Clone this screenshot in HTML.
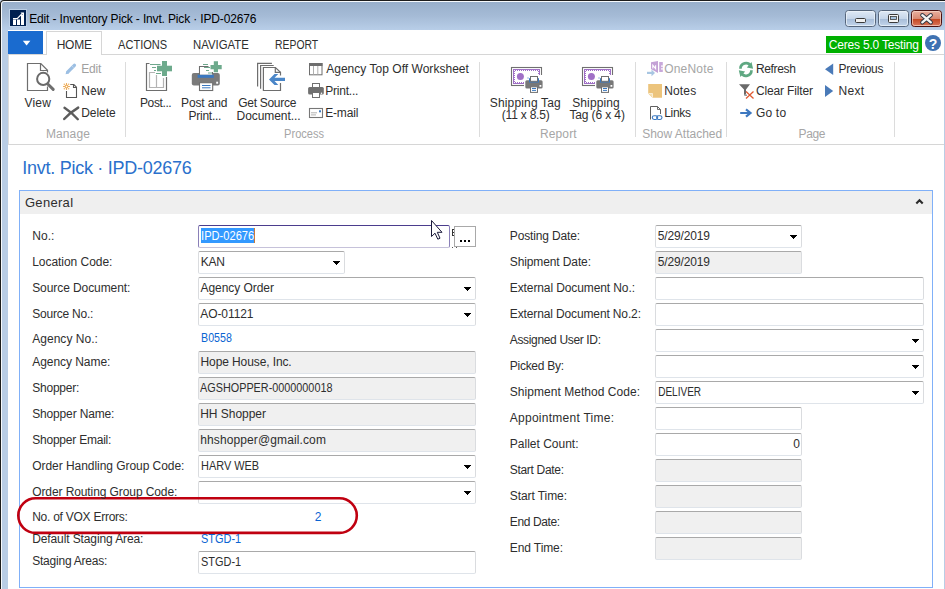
<!DOCTYPE html>
<html><head><meta charset="utf-8">
<style>
*{margin:0;padding:0;box-sizing:border-box}
html,body{width:945px;height:589px;overflow:hidden;background:#fff;font-family:"Liberation Sans",sans-serif;font-size:12px;color:#000;position:relative}
.a{position:absolute}
.t{position:absolute;white-space:pre;font-family:"Liberation Sans",sans-serif}
.sep{position:absolute;top:62px;width:1px;height:75px;background:#dcdcdc}
.f{position:absolute;height:23px;border:1px solid #dadcdf;border-top-color:#a9a9a9;border-bottom-color:#dfe4ea;border-radius:2px;background:#fff}
.f.g{background:#f0f0f0}
svg{position:absolute;left:0;top:0}
</style></head><body>
<!-- window frame -->
<div class="a" style="left:0;top:0;width:945px;height:589px;background:#c9d9eb"></div>
<div class="a" style="left:0;top:0;width:950px;height:600px;border-radius:4px 0 0 0;background:#1c1c1c"></div>
<div class="a" style="left:1px;top:1px;width:950px;height:600px;border-radius:3px 0 0 0;background:#f6f9fc"></div>
<div class="a" style="left:2px;top:2px;width:943px;height:587px;border-radius:2px 0 0 0;background:linear-gradient(#98afcb 0px,#a5bbd6 14px,#b8cee8 28px,#b9cde5 30px,#b9cde5 100%)"></div>
<div class="a" style="left:8px;top:30px;width:936px;height:559px;background:#fff"></div>

<!-- tab row -->
<div class="a" style="left:8px;top:31px;width:35px;height:23px;background:#1a6bcf"></div>
<div class="a" style="left:8px;top:54px;width:936px;height:1px;background:#d6d6d6"></div>
<div class="a" style="left:46px;top:31px;width:56px;height:24px;border:1px solid #d6d6d6;border-bottom:none;background:#fff"></div>
<div class="a" style="left:826px;top:36px;width:96px;height:17px;background:#00b000"></div>

<!-- ribbon -->
<div class="a" style="left:8px;top:144px;width:936px;height:1px;background:#d6d6d6"></div>
<div class="a" style="left:8px;top:55px;width:1px;height:90px;background:#dcdcdc"></div>
<div class="sep" style="left:125px"></div>
<div class="sep" style="left:479px"></div>
<div class="sep" style="left:635px"></div>
<div class="sep" style="left:726px"></div>
<div class="sep" style="left:894px"></div>

<!-- panel -->
<div class="a" style="left:19px;top:190px;width:914px;height:398px;border:1px solid #80b0f8;background:#fff"></div>
<div class="a" style="left:20px;top:191px;width:912px;height:23px;background:#efefef"></div>

<!-- left fields -->
<div class="f" style="left:198px;top:225px;width:252px;border-color:#c6c2da;border-top-color:#4b3d8d;border-left-color:#8a80b8;border-right-color:#8a80b8"></div>
<div class="a" style="left:201px;top:228px;width:53px;height:15px;background:#3399ff"></div>
<div class="a" style="left:254px;top:228px;width:1px;height:15px;background:#c87a3a"></div>
<div class="a" style="left:454px;top:226px;width:22px;height:21px;border:1px solid #a9a9a9;background:#fff"></div>
<div class="f" style="left:198px;top:251px;width:147px"></div>
<div class="f" style="left:198px;top:277px;width:278px"></div>
<div class="f" style="left:198px;top:303px;width:278px"></div>
<div class="f g" style="left:198px;top:351px;width:278px"></div>
<div class="f g" style="left:198px;top:377px;width:278px"></div>
<div class="f g" style="left:198px;top:403px;width:278px"></div>
<div class="f g" style="left:198px;top:429px;width:278px"></div>
<div class="f" style="left:198px;top:455px;width:278px"></div>
<div class="f" style="left:198px;top:481px;width:278px"></div>
<div class="f" style="left:198px;top:551px;width:278px"></div>

<!-- right fields -->
<div class="f" style="left:655px;top:225px;width:147px"></div>
<div class="f g" style="left:655px;top:251px;width:147px"></div>
<div class="f" style="left:655px;top:277px;width:269px"></div>
<div class="f" style="left:655px;top:303px;width:269px"></div>
<div class="f" style="left:655px;top:329px;width:269px"></div>
<div class="f" style="left:655px;top:355px;width:269px"></div>
<div class="f" style="left:655px;top:381px;width:269px"></div>
<div class="f" style="left:655px;top:407px;width:147px"></div>
<div class="f" style="left:655px;top:433px;width:147px"></div>
<div class="f g" style="left:655px;top:459px;width:147px"></div>
<div class="f g" style="left:655px;top:485px;width:147px"></div>
<div class="f g" style="left:655px;top:511px;width:147px"></div>
<div class="f g" style="left:655px;top:537px;width:147px"></div>
<svg width="945" height="589" viewBox="0 0 945 589">
<!-- app icon -->
<rect x="9" y="9" width="18" height="18" fill="#c8d8ec" opacity="0.7"/>
<rect x="10" y="10" width="16" height="16" fill="#002050"/>
<path d="M13 19.5h3v5.5h-3zM17 19.5h3v5.5h-3zM21 15h3v10h-3z" fill="#fff"/>
<path d="M13 18.6H17.2L22.6 13.2" stroke="#fff" stroke-width="1.2" fill="none"/>
<path d="M20.5 12.5H24V16Z" fill="#fff"/>
<!-- window buttons -->
<g>
<rect x="845.5" y="10.5" width="30" height="16" rx="3" fill="url(#gb)" stroke="#56667c"/>
<rect x="878.5" y="10.5" width="30" height="16" rx="3" fill="url(#gb)" stroke="#56667c"/>
<rect x="911.5" y="10.5" width="30" height="16" rx="3" fill="url(#gr)" stroke="#4a1010"/>
<rect x="846.5" y="11.5" width="28" height="14" rx="2" fill="none" stroke="#eef4fa" stroke-opacity="0.75"/>
<rect x="879.5" y="11.5" width="28" height="14" rx="2" fill="none" stroke="#eef4fa" stroke-opacity="0.75"/>
<rect x="912.5" y="11.5" width="28" height="14" rx="2" fill="none" stroke="#f8d8cc" stroke-opacity="0.7"/>
<rect x="855.5" y="18.5" width="10" height="4" rx="1" fill="#f0f0f0" stroke="#3a3a3a"/>
<rect x="888.5" y="14.5" width="10" height="8" rx="1" fill="#f4f4f4" stroke="#3a3a3a"/>
<rect x="890.5" y="16.5" width="6" height="3" fill="#a8c4e0" stroke="#3a3a3a" stroke-width="0.8"/>
<path d="M922.3 15.2L930.8 22.3M930.8 15.2L922.3 22.3" stroke="#2e3440" stroke-width="4.2" stroke-linecap="round"/>
<path d="M922.3 15.2L930.8 22.3M930.8 15.2L922.3 22.3" stroke="#f4f4f4" stroke-width="2.4" stroke-linecap="round"/>
</g>
<defs>
<linearGradient id="gb" x1="0" y1="0" x2="0" y2="1"><stop offset="0" stop-color="#e0eaf6"/><stop offset="0.5" stop-color="#c6d6ea"/><stop offset="0.51" stop-color="#a6bcd8"/><stop offset="1" stop-color="#c4d6ec"/></linearGradient>
<linearGradient id="gr" x1="0" y1="0" x2="0" y2="1"><stop offset="0" stop-color="#eab2a2"/><stop offset="0.5" stop-color="#d98a74"/><stop offset="0.51" stop-color="#c2441e"/><stop offset="1" stop-color="#dc7a60"/></linearGradient>
</defs>
<!-- dropdown arrow (tab) -->
<path d="M22.8 40.8h7.6l-3.8 4.6z" fill="#fff"/>
<!-- help -->
<circle cx="933" cy="43" r="8" fill="#3f72b2"/>
<text x="933" y="48.5" font-family="Liberation Sans" font-size="14" font-weight="bold" fill="#fff" text-anchor="middle">?</text>
<!-- panel collapse chevron -->
<path d="M916.3 203.4 L919.5 200.2 L922.7 203.4" stroke="#2a2a2a" stroke-width="2.1" fill="none"/>
</svg>
<svg width="945" height="589" viewBox="0 0 945 589">
<!-- View -->
<g fill="none" stroke="#6e6e6e" stroke-width="1.2">
<path d="M47.5 86.5V90.5H27.5V63.5H40.8L47.5 70.3V72.5"/>
<path d="M40.5 63.5V70.5H47.5"/>
</g>
<circle cx="43.2" cy="78.9" r="6.1" fill="none" stroke="#6a6a6a" stroke-width="2"/>
<path d="M48 84.2L53.2 89.4" stroke="#6e6e6e" stroke-width="3" stroke-linecap="round"/>
<!-- Edit pencil -->
<path d="M67.9 71.9L74.4 65.3" stroke="#9cbfe3" stroke-width="3.3" stroke-linecap="round"/>
<path d="M65.6 74.3L66.3 70.9L69 73.6Z" fill="#9cbfe3"/>
<path d="M72.2 66.3L73.5 67.6" stroke="#fff" stroke-width="0.6" opacity="0.8"/>
<!-- New -->
<g fill="none" stroke="#555" stroke-width="1.1">
<path d="M70.2 84.5H73.8L76.5 87.2V97.5H66.5V91"/>
<path d="M73.5 84.5V87.5H76.5"/>
</g>
<g stroke="#edae5c" stroke-width="1.1" fill="none">
<circle cx="66.5" cy="86.5" r="1.4" fill="#fff"/>
<path d="M66.5 83V85M66.5 88V90M63 86.5H65M68 86.5H70"/>
</g>
<g fill="#edae5c"><circle cx="64.3" cy="84.3" r="0.7"/><circle cx="68.7" cy="84.3" r="0.7"/><circle cx="64.3" cy="88.7" r="0.7"/><circle cx="68.7" cy="88.7" r="0.7"/></g>
<!-- Delete X -->
<path d="M64.5 107.8Q71 112 77.8 119.2M64.2 119Q70 112.5 78.2 107.6" stroke="#5c5c5c" stroke-width="2.4" fill="none" stroke-linecap="round"/>

<!-- Post -->
<g fill="none" stroke="#6e6e6e" stroke-width="1.2">
<path d="M149.5 63.5H146.5V90.5H166.5V77"/>
</g>
<g fill="none" stroke="#b4b4b4" stroke-width="1.2">
<path d="M155 72.5H149.5V87.5H163.5V78M156.5 75V87.5"/>
</g>
<g stroke="#6fa88d" stroke-width="1.2">
<path d="M150 64.5H160.5M152 67.5H156M154 70.5H156M156 73.5H161"/>
</g>
<path d="M162 61H167V65.7H172V71.2H167V76H162V71.2H157V65.7H162Z" fill="#6daa8c" stroke="#fff" stroke-width="1"/>
<path d="M162 61H167V65.7H172V71.2H167V76H162V71.2H157V65.7H162Z" fill="#6daa8c"/>

<!-- Post and Print -->
<rect x="191.8" y="73" width="28" height="12.5" rx="2" fill="#7a7a7a"/>
<rect x="197.6" y="74.6" width="16.2" height="3.2" fill="#3a78c0"/>
<path d="M199.5 74.8V66.5H208.5" fill="none" stroke="#6e6e6e" stroke-width="1.1"/>
<rect x="200" y="67" width="12.5" height="7.6" fill="#fff"/>
<path d="M212.5 74.5V72" stroke="#6e6e6e" stroke-width="1.1"/>
<g stroke="#6fa88d" stroke-width="1.1">
<path d="M203 64.5H208M204 67.5H210M206 70.5H209M208 73H212"/>
</g>
<path d="M213.8 61.2H218V65H221.7V69.3H218V72.2H213.8V69.3H210.5V65H213.8Z" fill="#6daa8c"/>
<rect x="199.5" y="82.7" width="13.2" height="7.8" fill="#fff" stroke="#6e6e6e" stroke-width="1.1"/>
<path d="M202 85.5H210.5M202 87.8H210.5" stroke="#3a78c0" stroke-width="1"/>
<rect x="216.2" y="81.7" width="1.9" height="2" fill="#fff"/>

<!-- Get Source -->
<g fill="none" stroke="#6e6e6e" stroke-width="1.2">
<path d="M257.6 86.6V63.4H271.9"/>
<path d="M260.6 88.7V65.5H273.7"/>
<path d="M280.5 83V90.5H263.4V67.5H275.4L280.5 72.3V75.5"/>
<path d="M275.3 67.5V72.4H280.5"/>
</g>
<path d="M269 79.4L274.5 73.9H278.3L274.5 77.8H285V81H274.5L278.3 85H274.5Z" fill="#4a86c8"/>

<!-- Worksheet -->
<rect x="309.5" y="63.5" width="12.5" height="11.3" fill="none" stroke="#6e6e6e" stroke-width="1"/>
<rect x="309" y="63" width="13.5" height="3" fill="#6e6e6e"/>
<path d="M313.5 66V74.5M317.8 66V74.5" stroke="#b0b0b0" stroke-width="1"/>
<!-- Print small -->
<rect x="312.5" y="83.5" width="7" height="4" fill="#fff" stroke="#707070" stroke-width="1"/>
<rect x="308.1" y="87.1" width="15.7" height="7.5" rx="1.5" fill="#707070"/>
<rect x="312.5" y="92.5" width="7" height="5" fill="#fff" stroke="#707070" stroke-width="1"/>
<circle cx="321.5" cy="93.2" r="0.8" fill="#fff"/>
<!-- E-mail -->
<rect x="309.5" y="108.5" width="13" height="9" fill="#fff" stroke="#777" stroke-width="1.1"/>
<rect x="319" y="110.3" width="2" height="2" fill="#3a78c0"/>
<path d="M311 112.8H317M311 114.9H316" stroke="#a8a8a8" stroke-width="0.9"/>

<!-- Shipping Tag icons -->
<g>
<rect x="511.5" y="67.5" width="30" height="18" fill="#fff" stroke="#707070" stroke-width="1.1"/>
<rect x="513" y="69" width="27" height="15" fill="#a070c6"/>
<rect x="515" y="71" width="23" height="11" fill="#fff"/>
<path d="M514 70h1v1h-1zM514 82h1v1h-1zM516 70h1v1h-1zM516 82h1v1h-1zM518 70h1v1h-1zM518 82h1v1h-1zM520 70h1v1h-1zM520 82h1v1h-1zM522 70h1v1h-1zM522 82h1v1h-1zM524 70h1v1h-1zM524 82h1v1h-1zM526 70h1v1h-1zM526 82h1v1h-1zM528 70h1v1h-1zM528 82h1v1h-1zM530 70h1v1h-1zM530 82h1v1h-1zM532 70h1v1h-1zM532 82h1v1h-1zM534 70h1v1h-1zM534 82h1v1h-1zM536 70h1v1h-1zM536 82h1v1h-1zM538 70h1v1h-1zM538 82h1v1h-1zM514 72h1v1h-1zM538 72h1v1h-1zM514 74h1v1h-1zM538 74h1v1h-1zM514 76h1v1h-1zM538 76h1v1h-1zM514 78h1v1h-1zM538 78h1v1h-1zM514 80h1v1h-1zM538 80h1v1h-1z" fill="#fff"/>
<circle cx="520.4" cy="76.4" r="3.5" fill="#a070c6"/>
<rect x="524" y="75" width="20" height="19" fill="#fff"/>
<rect x="525.3" y="80.3" width="17.3" height="8.2" rx="1.5" fill="#787878"/>
<rect x="529" y="78.2" width="10" height="4.3" fill="#3a78c0"/>
<rect x="530.5" y="76.5" width="7" height="4.8" fill="#fff" stroke="#707070" stroke-width="1"/>
<rect x="530.5" y="86.8" width="7" height="5.6" fill="#fff" stroke="#707070" stroke-width="1"/>
<path d="M532 88.5H536M532 90.4H536" stroke="#3a78c0" stroke-width="1"/>
<rect x="539.5" y="85" width="1.8" height="1.8" fill="#fff"/>
<rect x="527.5" y="77.5" width="1" height="1" fill="#3a78c0"/>
</g>
<g transform="translate(71 0)">
<rect x="511.5" y="67.5" width="30" height="18" fill="#fff" stroke="#707070" stroke-width="1.1"/>
<rect x="513" y="69" width="27" height="15" fill="#a070c6"/>
<rect x="515" y="71" width="23" height="11" fill="#fff"/>
<path d="M514 70h1v1h-1zM514 82h1v1h-1zM516 70h1v1h-1zM516 82h1v1h-1zM518 70h1v1h-1zM518 82h1v1h-1zM520 70h1v1h-1zM520 82h1v1h-1zM522 70h1v1h-1zM522 82h1v1h-1zM524 70h1v1h-1zM524 82h1v1h-1zM526 70h1v1h-1zM526 82h1v1h-1zM528 70h1v1h-1zM528 82h1v1h-1zM530 70h1v1h-1zM530 82h1v1h-1zM532 70h1v1h-1zM532 82h1v1h-1zM534 70h1v1h-1zM534 82h1v1h-1zM536 70h1v1h-1zM536 82h1v1h-1zM538 70h1v1h-1zM538 82h1v1h-1zM514 72h1v1h-1zM538 72h1v1h-1zM514 74h1v1h-1zM538 74h1v1h-1zM514 76h1v1h-1zM538 76h1v1h-1zM514 78h1v1h-1zM538 78h1v1h-1zM514 80h1v1h-1zM538 80h1v1h-1z" fill="#fff"/>
<circle cx="520.4" cy="76.4" r="3.5" fill="#a070c6"/>
<rect x="524" y="75" width="20" height="19" fill="#fff"/>
<rect x="525.3" y="80.3" width="17.3" height="8.2" rx="1.5" fill="#787878"/>
<rect x="529" y="78.2" width="10" height="4.3" fill="#3a78c0"/>
<rect x="530.5" y="76.5" width="7" height="4.8" fill="#fff" stroke="#707070" stroke-width="1"/>
<rect x="530.5" y="86.8" width="7" height="5.6" fill="#fff" stroke="#707070" stroke-width="1"/>
<path d="M532 88.5H536M532 90.4H536" stroke="#3a78c0" stroke-width="1"/>
<rect x="539.5" y="85" width="1.8" height="1.8" fill="#fff"/>
<rect x="527.5" y="77.5" width="1" height="1" fill="#3a78c0"/>
</g>


<!-- OneNote -->
<path d="M651 62.2L658 61V73L654.5 71L651 69Z" fill="#c4a2d6"/>
<path d="M652.8 68.6V65.2L655.6 68.6V65.2" stroke="#fff" stroke-width="1.1" fill="none"/>
<rect x="659.2" y="62" width="3.6" height="10" fill="#c8a8da"/>
<rect x="661" y="65.5" width="2" height="1.2" fill="#fff"/>
<rect x="661" y="68.3" width="2" height="1.2" fill="#fff"/>
<path d="M647 72.9H652.5" stroke="#a8c6e2" stroke-width="2.2"/>
<path d="M651.5 69.6L655 72.9L651.5 76.2Z" fill="#a8c6e2"/>
<!-- Notes -->
<path d="M648.2 84H662V97.8H652.5L648.2 93.5Z" fill="#ecc47c"/>
<path d="M648.5 93.5H652.5V97.5" fill="#f6e0b0" stroke="#fff" stroke-width="0.6"/>
<!-- Links -->
<path d="M650.5 119.5V106.5H657.5L660.5 109.5V114" fill="none" stroke="#606060" stroke-width="1"/>
<path d="M657.5 106.5V109.5H660.5" fill="none" stroke="#606060" stroke-width="0.9"/>
<rect x="651" y="114.5" width="12" height="7" fill="#fff"/>
<g fill="none" stroke="#3a78c0" stroke-width="1.1">
<rect x="652.3" y="115.7" width="5.4" height="3.8" rx="1.9"/>
<rect x="656.6" y="115.7" width="5.4" height="3.8" rx="1.9"/>
</g>

<!-- Refresh -->
<g fill="none" stroke="#5fa882" stroke-width="2.7">
<path d="M740.45 68.8A5.5 5.5 0 0 1 750.7 65.95"/>
<path d="M751.45 70.2A5.5 5.5 0 0 1 741.2 73.05"/>
</g>
<path d="M746.8 67.6L753.1 68.8L751.5 62Z" fill="#5fa882"/>
<path d="M745.1 71.4L738.8 70.2L740.4 77Z" fill="#5fa882"/>
<!-- Clear Filter -->
<path d="M739 84.3H750L746 89.5V94.5H744V89.5Z" fill="#6a6a6a"/>
<path d="M744.5 94.5V95.2H747" stroke="#6a6a6a" stroke-width="1" fill="none"/>
<path d="M746 91.5L753.5 98.5M753.5 91.5L746 98.5" stroke="#e05a32" stroke-width="1.3"/>
<!-- Go to -->
<path d="M740.2 113H750M746 109.3L750.5 113L746 116.7" stroke="#3d78c0" stroke-width="2.2" fill="none"/>
<!-- Previous / Next -->
<path d="M833.2 63.6V75L825 69.3Z" fill="#4a7ab8"/>
<path d="M825 85V96.9L833.2 91Z" fill="#4a7ab8"/>

<!-- dropdown triangles -->
<g fill="#000">
<path d="M333 261h7v1h-7zM334 262h5v1h-5zM335 263h3v1h-3zM336 264h1v1h-1z"/>
<path d="M464 287h7v1h-7zM465 288h5v1h-5zM466 289h3v1h-3zM467 290h1v1h-1z"/>
<path d="M464 313h7v1h-7zM465 314h5v1h-5zM466 315h3v1h-3zM467 316h1v1h-1z"/>
<path d="M464 465h7v1h-7zM465 466h5v1h-5zM466 467h3v1h-3zM467 468h1v1h-1z"/>
<path d="M464 491h7v1h-7zM465 492h5v1h-5zM466 493h3v1h-3zM467 494h1v1h-1z"/>
<path d="M790 235h7v1h-7zM791 236h5v1h-5zM792 237h3v1h-3zM793 238h1v1h-1z"/>
<path d="M912 339h7v1h-7zM913 340h5v1h-5zM914 341h3v1h-3zM915 342h1v1h-1z"/>
<path d="M912 365h7v1h-7zM913 366h5v1h-5zM914 367h3v1h-3zM915 368h1v1h-1z"/>
<path d="M912 391h7v1h-7zM913 392h5v1h-5zM914 393h3v1h-3zM915 394h1v1h-1z"/>
</g>
<!-- ... button dots -->
<path d="M460 240h2v2h-2zM464 240h2v2h-2zM468 240h2v2h-2z" fill="#000"/>
<!-- E fragment -->
<path d="M452 229h2v1h-1v2h1v1h-1v2h1v1h-2z" fill="#333"/>
<path d="M452 247h1v1h-1zM456 247h1v1h-1z" fill="#555"/>

<!-- red highlight -->
<rect x="18.3" y="498.3" width="338.5" height="34.6" rx="17.3" fill="none" stroke="#c00010" stroke-width="2.6"/>

<!-- mouse cursor -->
<path d="M431.5 220.5V236.5L435 233.2L437.8 239.2L440 238.2L437.3 232.3H442Z" fill="#fff" stroke="#1a1a3a" stroke-width="1" stroke-linejoin="miter"/>
</svg>
<div class="t" style="left:29.20px;top:12.04px;font-size:12px;line-height:14px;letter-spacing:-0.153px;color:#000;">Edit - Inventory Pick - Invt. Pick · IPD-02676</div>
<div class="t" style="left:56.70px;top:37.64px;font-size:12px;line-height:14px;letter-spacing:-0.267px;color:#2e2e2e;">HOME</div>
<div class="t" style="left:118.00px;top:37.64px;font-size:12px;line-height:14px;transform:scaleX(0.9205);transform-origin:0.80px 0;color:#2e2e2e;">ACTIONS</div>
<div class="t" style="left:193.20px;top:37.64px;font-size:12px;line-height:14px;transform:scaleX(0.9462);transform-origin:0.80px 0;color:#2e2e2e;">NAVIGATE</div>
<div class="t" style="left:275.20px;top:37.64px;font-size:12px;line-height:14px;transform:scaleX(0.8643);transform-origin:0.80px 0;color:#2e2e2e;">REPORT</div>
<div class="t" style="left:828.70px;top:37.74px;font-size:12px;line-height:14px;letter-spacing:-0.186px;color:#fff;">Ceres 5.0 Testing</div>
<div class="t" style="left:24.50px;top:95.84px;font-size:12px;line-height:14px;letter-spacing:0.201px;color:#2e2e2e;">View</div>
<div class="t" style="left:81.20px;top:61.84px;font-size:12px;line-height:14px;letter-spacing:-0.163px;color:#a0a0a0;">Edit</div>
<div class="t" style="left:81.20px;top:83.84px;font-size:12px;line-height:14px;letter-spacing:0.092px;color:#2e2e2e;">New</div>
<div class="t" style="left:81.20px;top:105.84px;font-size:12px;line-height:14px;letter-spacing:-0.037px;color:#2e2e2e;">Delete</div>
<div class="t" style="left:45.90px;top:126.84px;font-size:12px;line-height:14px;letter-spacing:0.125px;color:#a6a6a6;">Manage</div>
<div class="t" style="left:140.00px;top:95.64px;font-size:12px;line-height:14px;letter-spacing:-0.386px;color:#2e2e2e;">Post...</div>
<div class="t" style="left:181.00px;top:95.64px;font-size:12px;line-height:14px;letter-spacing:-0.125px;color:#2e2e2e;">Post and</div>
<div class="t" style="left:188.60px;top:108.64px;font-size:12px;line-height:14px;letter-spacing:-0.270px;color:#2e2e2e;">Print...</div>
<div class="t" style="left:238.20px;top:95.64px;font-size:12px;line-height:14px;letter-spacing:-0.278px;color:#2e2e2e;">Get Source</div>
<div class="t" style="left:236.60px;top:108.64px;font-size:12px;line-height:14px;letter-spacing:-0.070px;color:#2e2e2e;">Document...</div>
<div class="t" style="left:326.20px;top:61.94px;font-size:12px;line-height:14px;letter-spacing:0.027px;color:#2e2e2e;">Agency Top Off Worksheet</div>
<div class="t" style="left:325.20px;top:83.84px;font-size:12px;line-height:14px;letter-spacing:-0.212px;color:#2e2e2e;">Print...</div>
<div class="t" style="left:325.20px;top:105.84px;font-size:12px;line-height:14px;letter-spacing:-0.163px;color:#2e2e2e;">E-mail</div>
<div class="t" style="left:283.50px;top:126.84px;font-size:12px;line-height:14px;transform:scaleX(0.9227);transform-origin:0.80px 0;color:#a6a6a6;">Process</div>
<div class="t" style="left:489.80px;top:95.64px;font-size:12px;line-height:14px;letter-spacing:0.157px;color:#2e2e2e;">Shipping Tag</div>
<div class="t" style="left:501.80px;top:108.44px;font-size:12px;line-height:14px;letter-spacing:-0.212px;color:#2e2e2e;">(11 x 8.5)</div>
<div class="t" style="left:572.20px;top:95.64px;font-size:12px;line-height:14px;letter-spacing:0.126px;color:#2e2e2e;">Shipping</div>
<div class="t" style="left:569.40px;top:108.44px;font-size:12px;line-height:14px;letter-spacing:-0.120px;color:#2e2e2e;">Tag (6 x 4)</div>
<div class="t" style="left:539.90px;top:126.84px;font-size:12px;line-height:14px;letter-spacing:0.154px;color:#a6a6a6;">Report</div>
<div class="t" style="left:664.20px;top:61.94px;font-size:12px;line-height:14px;letter-spacing:0.195px;color:#a6a6a6;">OneNote</div>
<div class="t" style="left:664.20px;top:83.84px;font-size:12px;line-height:14px;letter-spacing:0.160px;color:#2e2e2e;">Notes</div>
<div class="t" style="left:664.20px;top:105.84px;font-size:12px;line-height:14px;letter-spacing:-0.279px;color:#2e2e2e;">Links</div>
<div class="t" style="left:642.20px;top:126.84px;font-size:12px;line-height:14px;letter-spacing:-0.005px;color:#a6a6a6;">Show Attached</div>
<div class="t" style="left:755.90px;top:61.94px;font-size:12px;line-height:14px;letter-spacing:-0.339px;color:#2e2e2e;">Refresh</div>
<div class="t" style="left:755.90px;top:83.84px;font-size:12px;line-height:14px;letter-spacing:-0.144px;color:#2e2e2e;">Clear Filter</div>
<div class="t" style="left:755.90px;top:105.84px;font-size:12px;line-height:14px;letter-spacing:0.210px;color:#2e2e2e;">Go to</div>
<div class="t" style="left:838.50px;top:61.94px;font-size:12px;line-height:14px;letter-spacing:-0.241px;color:#2e2e2e;">Previous</div>
<div class="t" style="left:838.50px;top:83.84px;font-size:12px;line-height:14px;letter-spacing:0.304px;color:#2e2e2e;">Next</div>
<div class="t" style="left:798.50px;top:126.84px;font-size:12px;line-height:14px;letter-spacing:-0.377px;color:#a6a6a6;">Page</div>
<div class="t" style="left:22.30px;top:158.06px;font-size:18px;line-height:21px;letter-spacing:-0.270px;color:#2a70cc;">Invt. Pick · IPD-02676</div>
<div class="t" style="left:24.93px;top:194.80px;font-size:13px;line-height:15px;letter-spacing:0.308px;color:#2e2e2e;">General</div>
<div class="t" style="left:32.20px;top:228.84px;font-size:12px;line-height:14px;letter-spacing:0.061px;color:#2e2e2e;">No.:</div>
<div class="t" style="left:32.20px;top:254.84px;font-size:12px;line-height:14px;letter-spacing:-0.041px;color:#2e2e2e;">Location Code:</div>
<div class="t" style="left:32.20px;top:280.84px;font-size:12px;line-height:14px;letter-spacing:-0.079px;color:#2e2e2e;">Source Document:</div>
<div class="t" style="left:32.20px;top:306.84px;font-size:12px;line-height:14px;letter-spacing:-0.217px;color:#2e2e2e;">Source No.:</div>
<div class="t" style="left:32.20px;top:331.84px;font-size:12px;line-height:14px;letter-spacing:0.033px;color:#2e2e2e;">Agency No.:</div>
<div class="t" style="left:32.20px;top:354.84px;font-size:12px;line-height:14px;letter-spacing:-0.046px;color:#2e2e2e;">Agency Name:</div>
<div class="t" style="left:32.20px;top:380.84px;font-size:12px;line-height:14px;letter-spacing:-0.215px;color:#2e2e2e;">Shopper:</div>
<div class="t" style="left:32.20px;top:406.84px;font-size:12px;line-height:14px;letter-spacing:-0.154px;color:#2e2e2e;">Shopper Name:</div>
<div class="t" style="left:32.20px;top:432.84px;font-size:12px;line-height:14px;letter-spacing:-0.219px;color:#2e2e2e;">Shopper Email:</div>
<div class="t" style="left:32.20px;top:458.84px;font-size:12px;line-height:14px;letter-spacing:-0.049px;color:#2e2e2e;">Order Handling Group Code:</div>
<div class="t" style="left:32.20px;top:484.64px;font-size:12px;line-height:14px;letter-spacing:-0.093px;color:#2e2e2e;">Order Routing Group Code:</div>
<div class="t" style="left:32.20px;top:509.84px;font-size:12px;line-height:14px;letter-spacing:-0.255px;color:#2e2e2e;">No. of VOX Errors:</div>
<div class="t" style="left:32.20px;top:531.84px;font-size:12px;line-height:14px;letter-spacing:-0.111px;color:#2e2e2e;">Default Staging Area:</div>
<div class="t" style="left:32.20px;top:554.34px;font-size:12px;line-height:14px;letter-spacing:-0.220px;color:#2e2e2e;">Staging Areas:</div>
<div class="t" style="left:509.80px;top:228.84px;font-size:12px;line-height:14px;letter-spacing:-0.154px;color:#2e2e2e;">Posting Date:</div>
<div class="t" style="left:509.80px;top:254.84px;font-size:12px;line-height:14px;letter-spacing:-0.117px;color:#2e2e2e;">Shipment Date:</div>
<div class="t" style="left:509.80px;top:280.84px;font-size:12px;line-height:14px;letter-spacing:-0.104px;color:#2e2e2e;">External Document No.:</div>
<div class="t" style="left:509.80px;top:306.84px;font-size:12px;line-height:14px;letter-spacing:-0.130px;color:#2e2e2e;">External Document No.2:</div>
<div class="t" style="left:509.80px;top:332.84px;font-size:12px;line-height:14px;letter-spacing:-0.344px;color:#2e2e2e;">Assigned User ID:</div>
<div class="t" style="left:509.80px;top:358.84px;font-size:12px;line-height:14px;letter-spacing:-0.278px;color:#2e2e2e;">Picked By:</div>
<div class="t" style="left:509.80px;top:384.84px;font-size:12px;line-height:14px;letter-spacing:0.039px;color:#2e2e2e;">Shipment Method Code:</div>
<div class="t" style="left:509.80px;top:410.84px;font-size:12px;line-height:14px;letter-spacing:0.259px;color:#2e2e2e;">Appointment Time:</div>
<div class="t" style="left:509.80px;top:436.84px;font-size:12px;line-height:14px;letter-spacing:-0.002px;color:#2e2e2e;">Pallet Count:</div>
<div class="t" style="left:509.80px;top:462.84px;font-size:12px;line-height:14px;letter-spacing:-0.316px;color:#2e2e2e;">Start Date:</div>
<div class="t" style="left:509.80px;top:488.84px;font-size:12px;line-height:14px;letter-spacing:-0.082px;color:#2e2e2e;">Start Time:</div>
<div class="t" style="left:509.80px;top:514.84px;font-size:12px;line-height:14px;letter-spacing:-0.397px;color:#2e2e2e;">End Date:</div>
<div class="t" style="left:509.80px;top:540.84px;font-size:12px;line-height:14px;letter-spacing:-0.104px;color:#2e2e2e;">End Time:</div>
<div class="t" style="left:200.70px;top:228.84px;font-size:12px;line-height:14px;transform:scaleX(0.9257);transform-origin:0.80px 0;color:#fff;">IPD-02676</div>
<div class="t" style="left:200.70px;top:254.84px;font-size:12px;line-height:14px;letter-spacing:-0.244px;color:#2e2e2e;">KAN</div>
<div class="t" style="left:200.50px;top:280.84px;font-size:12px;line-height:14px;letter-spacing:-0.050px;color:#2e2e2e;">Agency Order</div>
<div class="t" style="left:200.30px;top:306.84px;font-size:12px;line-height:14px;letter-spacing:-0.087px;color:#2e2e2e;">AO-01121</div>
<div class="t" style="left:200.80px;top:331.44px;font-size:12px;line-height:14px;transform:scaleX(0.8865);transform-origin:0.80px 0;color:#0a64d2;">B0558</div>
<div class="t" style="left:200.50px;top:354.84px;font-size:12px;line-height:14px;letter-spacing:-0.101px;color:#2e2e2e;">Hope House, Inc.</div>
<div class="t" style="left:200.20px;top:380.84px;font-size:12px;line-height:14px;transform:scaleX(0.9020);transform-origin:0.80px 0;color:#2e2e2e;">AGSHOPPER-0000000018</div>
<div class="t" style="left:200.20px;top:406.84px;font-size:12px;line-height:14px;letter-spacing:-0.027px;color:#2e2e2e;">HH Shopper</div>
<div class="t" style="left:200.20px;top:432.84px;font-size:12px;line-height:14px;letter-spacing:0.118px;color:#2e2e2e;">hhshopper@gmail.com</div>
<div class="t" style="left:200.60px;top:458.84px;font-size:12px;line-height:14px;transform:scaleX(0.9106);transform-origin:0.80px 0;color:#2e2e2e;">HARV WEB</div>
<div class="t" style="left:314.70px;top:509.84px;font-size:12px;line-height:14px;letter-spacing:0.000px;color:#0a64d2;">2</div>
<div class="t" style="left:200.60px;top:531.84px;font-size:12px;line-height:14px;transform:scaleX(0.9109);transform-origin:0.80px 0;color:#0a64d2;">STGD-1</div>
<div class="t" style="left:200.60px;top:554.84px;font-size:12px;line-height:14px;transform:scaleX(0.9109);transform-origin:0.80px 0;color:#2e2e2e;">STGD-1</div>
<div class="t" style="left:657.70px;top:228.84px;font-size:12px;line-height:14px;letter-spacing:-0.149px;color:#2e2e2e;">5/29/2019</div>
<div class="t" style="left:657.70px;top:254.84px;font-size:12px;line-height:14px;letter-spacing:-0.149px;color:#2e2e2e;">5/29/2019</div>
<div class="t" style="left:657.70px;top:384.84px;font-size:12px;line-height:14px;transform:scaleX(0.8373);transform-origin:0.80px 0;color:#2e2e2e;">DELIVER</div>
<div class="t" style="left:793.20px;top:436.84px;font-size:12px;line-height:14px;letter-spacing:0.000px;color:#2e2e2e;">0</div>
</body></html>
